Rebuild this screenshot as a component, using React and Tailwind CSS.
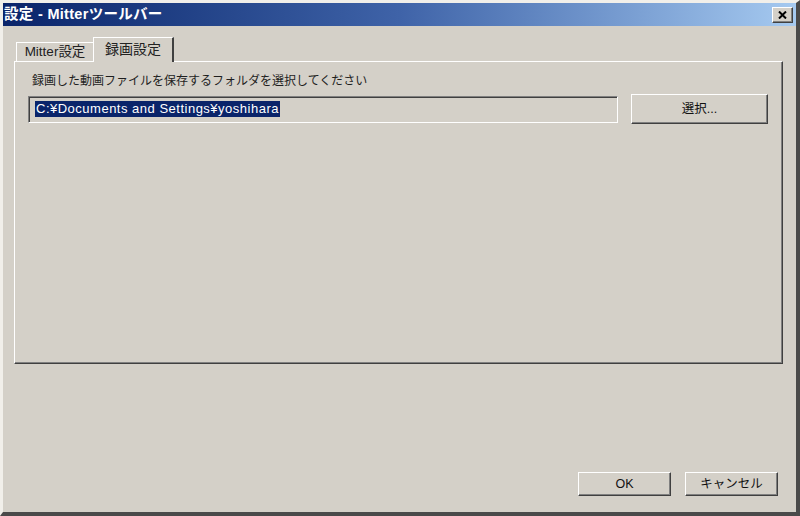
import React from "react";

const jp = { fontFamily: '"Liberation Sans", "Noto Sans CJK JP", sans-serif' };

function RaisedButton({ children, className = "" }) {
  return (
    <div
      className={`flex items-center justify-center bg-[#d4d0c8] border border-t-[#ffffff] border-l-[#ffffff] border-r-[#404040] border-b-[#404040] shadow-[inset_-1px_-1px_0_#808080] text-[12.5px] text-[#111] ${className}`}
      style={jp}
    >
      {children}
    </div>
  );
}

export default function App() {
  return (
    <div
      className="w-[800px] h-[516px] flex flex-col bg-[#d4d0c8] border-t-[3px] border-l-[3px] border-r-[4px] border-b-[4px] border-t-[#f1efea] border-l-[#f1efea] border-r-[#4a4a4a] border-b-[#4a4a4a] overflow-hidden"
      style={jp}
    >
      {/* Title bar */}
      <div className="h-[23px] flex items-center justify-between bg-gradient-to-r from-[#0a246a] via-[#3f63a8] to-[#a6caf0] pl-[1px] pr-[3px]">
        <span className="text-white font-bold text-[14.5px] leading-none tracking-[0.3px]">
          設定 - Mitterツールバー
        </span>
        <div className="w-[21px] h-[16px] flex items-center justify-center bg-[#d4d0c8] border border-t-[#ffffff] border-l-[#ffffff] border-r-[#404040] border-b-[#404040] shadow-[inset_-1px_-1px_0_#808080]">
          <svg width="9" height="8" viewBox="0 0 9 8">
            <path d="M1 0.5 L8 7.5 M8 0.5 L1 7.5" stroke="#000" strokeWidth="2" />
          </svg>
        </div>
      </div>

      {/* Tabs */}
      <div className="mt-[11px] h-[24px] flex items-end pl-[13px]">
        <div className="h-[19px] w-[78px] flex items-center justify-center border-t border-l border-t-[#ffffff] border-l-[#ffffff] border-r border-r-[#808080] text-[13.5px] text-[#222] leading-none">
          Mitter設定
        </div>
        <div className="relative z-10 -mb-px h-[25px] w-[81px] -ml-[1px] flex items-center justify-center bg-[#d4d0c8] border-t border-l border-t-[#ffffff] border-l-[#ffffff] border-r-2 border-r-[#404040] text-[14px] text-[#222] leading-none pb-[2px]">
          録画設定
        </div>
      </div>

      {/* Panel */}
      <div className="ml-[11px] mr-[13px] h-[303px] flex flex-col border border-t-[#ffffff] border-l-[#ffffff] border-r-[#404040] border-b-[#404040] shadow-[inset_-1px_-1px_0_#808080] px-[13px] pt-[11px]">
        <div className="text-[12px] text-[#1e1e1e] leading-[16px] pl-[4px]">
          録画した動画ファイルを保存するフォルダを選択してください
        </div>
        <div className="mt-[5px] flex items-center gap-[13px]">
          <div className="w-[590px] h-[27px] flex items-center bg-[#d4d0c8] border border-t-[#808080] border-l-[#808080] border-r-[#ffffff] border-b-[#ffffff] shadow-[inset_1px_1px_0_#404040] pl-[6px]">
            <span className="bg-[#0a246a] text-white text-[13px] tracking-[0.5px] leading-[16px] px-[1px]">
              C:¥Documents and Settings¥yoshihara
            </span>
          </div>
          <RaisedButton className="w-[137px] h-[30px]">選択...</RaisedButton>
        </div>
      </div>

      {/* Bottom buttons */}
      <div className="mt-auto mb-[16px] flex justify-end gap-[14px] pr-[18px]">
        <RaisedButton className="w-[93px] h-[24px]">OK</RaisedButton>
        <RaisedButton className="w-[93px] h-[24px]">キャンセル</RaisedButton>
      </div>
    </div>
  );
}
